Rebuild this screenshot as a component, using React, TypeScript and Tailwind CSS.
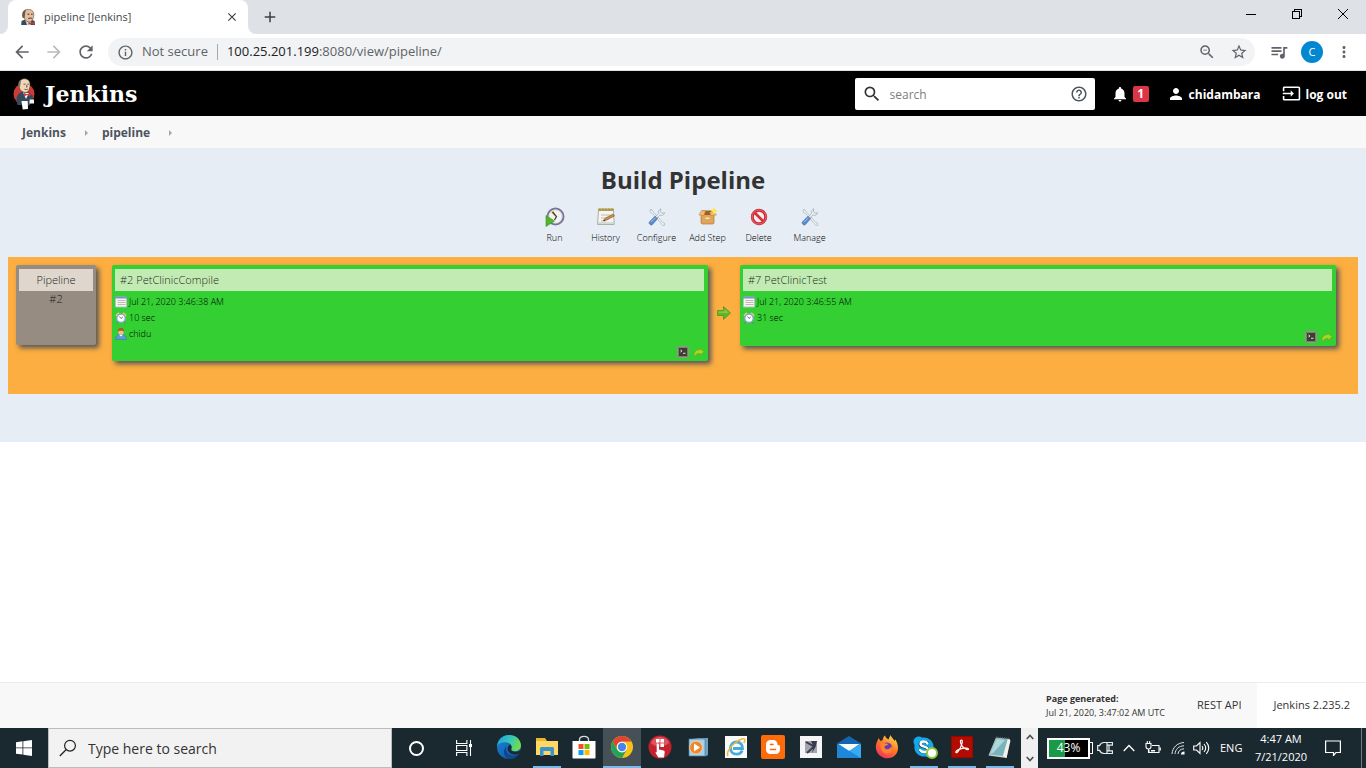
import type { ReactNode } from 'react';
import {
  MdAdd,
  MdArrowBack,
  MdArrowForward,
  MdClose,
  MdHelpOutline,
  MdInfoOutline,
  MdInput,
  MdMoreVert,
  MdNotifications,
  MdPerson,
  MdQueueMusic,
  MdRefresh,
  MdSearch,
  MdStarBorder,
  MdZoomOut,
} from 'react-icons/md';
import { FaBloggerB, FaSkype } from 'react-icons/fa';

/* ---------- Jenkins artwork ---------- */

function JenkinsFavicon() {
  return (
    <svg viewBox="0 0 16 16" className="size-4 shrink-0" aria-hidden="true">
      <path d="M1.2 16 1.500 12 5 10.500h6l3.600 1.500.4 4z" fill="#394b5a" />
      <path d="M5 10.500 7 16h3.500l1-5.500z" fill="#d9d5cf" />
      <path d="M3 5C3 1.500 6 .3 8.600.4c3.500.1 5.300 2.200 5.200 5.200-.1 3.500-1.400 7.200-4.400 7.300-3 .1-6.200-3.400-6.400-7.900z" fill="#e3bf9f" stroke="#5b463a" strokeWidth=".6" />
      <path d="M2.600 8.800C1.400 4.500 3 1.400 6 .6L5.200 4l-.6 5.300z" fill="#6d5a4c" />
      <path d="M7.500 5.200h1.900M11 5.200h1.700M8.300 9.600c1.400-.6 2.800-.6 4 0" stroke="#3a2c25" strokeWidth="1" fill="none" />
      <path d="m8.500 12.900 2.600 1 3-1.300v3.100l-3-1-2.600 1.100z" fill="#c8372f" />
    </svg>
  );
}

function JenkinsMascot() {
  return (
    <svg viewBox="0 0 24 32" className="h-8 w-6 shrink-0" aria-hidden="true">
      <ellipse cx="12" cy="16" rx="10.500" ry="10.500" fill="#cf3a36" />
      <path d="M5.500 27c-1.400-3.500-1.400-7.500.3-10.500l3.700-2.500 8 .5 3 3 .7 4-3.700 6z" fill="#33495c" />
      <path d="m11 14.500 3 6.500 3-6z" fill="#f5f3f0" />
      <g transform="translate(2.700 -.2) scale(.84)">
        <path d="M5 8.500C5 4 7.600 1.200 11.600 1.200c4.700 0 6.900 3.200 6.700 7.500-.2 4.800-1.900 8.800-5.600 8.800-3.500 0-7.700-3-7.700-9z" fill="#f0d5b7" stroke="#423630" strokeWidth=".7" />
        <path d="M4.500 11.500c-1-4.700.7-8.400 3.200-9.500L7.200 6l-1 5.500z" fill="#817367" />
        <path d="M10.500 7.600h2.500M15 7.600h2M11.600 13.600c1.500.6 2.900.5 4-.2M14.200 8.500l.6 2.500h-1.200" stroke="#3e3029" strokeWidth=".9" fill="none" />
      </g>
      <path d="m12 15 3 1.300 3.400-1.500v3.400L15 17l-3 1.500z" fill="#d33833" />
      <path d="M9.500 23h6.200l.3 8-5.300.5z" fill="#fff" />
      <path d="M17.700 21.500h4.300v4h-4.600z" fill="#f5f3f0" />
    </svg>
  );
}

/* ---------- Pipeline toolbar icons ---------- */

function RunIcon() {
  return (
    <svg viewBox="0 0 20 20" className="size-5" aria-hidden="true">
      <circle cx="10.500" cy="9.500" r="8" fill="#f2f3ef" stroke="#77759a" strokeWidth="2" />
      <circle cx="10.500" cy="9.500" r="6.600" fill="none" stroke="#c9cad4" strokeWidth=".6" />
      <path d="M10 9.500 6 5.200 9 3.500z" fill="#dccc5a" />
      <path d="m7.500 5 4 4.500-2 3.500" fill="none" stroke="#383838" strokeWidth="1.200" />
      <path d="M1 8.500 9.500 14 1 19.500z" fill="#52b52c" stroke="#39911e" strokeWidth=".6" />
    </svg>
  );
}

function HistoryIcon() {
  return (
    <svg viewBox="0 0 20 20" className="size-5" aria-hidden="true">
      <path d="M2.500 3h15l.7 14.500H1.500z" fill="#f5f5f2" stroke="#aeb0ac" />
      <path d="M2 1.500h16V4H2z" fill="#b7a755" />
      <path d="M4 1v3M7 1v3M10 1v3M13 1v3M16 1v3" stroke="#8a7d42" strokeWidth=".6" />
      <path d="M5 8h9M5 11h6M5 14h5M2 16h16" stroke="#bbbdb9" />
      <path d="m7.500 13.500 1.600-2.300 8-4.200 1.400 1.900-8 4.300z" fill="#d38a42" stroke="#72471f" strokeWidth=".5" />
      <path d="m7 13.900 2.100-.1-.9-1.300z" fill="#332b25" />
    </svg>
  );
}

function ToolsIcon() {
  return (
    <svg viewBox="0 0 20 20" className="size-5" aria-hidden="true">
      <path d="m3.200 2.500 1.800.3 1.700 2.700 8.800 9.700 1.900.8.300 2.200-1.700.4-1.800-2.200-8.700-9.700-2.200-1.400z" fill="#eff2f3" stroke="#9ba8b2" strokeWidth=".6" />
      <path d="M17.700 5.700a3.800 3.800 0 0 1-4.800 2.400l-3 3-1.500-1.500 3-3A3.800 3.800 0 0 1 14 1.800l-.7 2.700 1.800 1.600z" fill="#e6ebee" stroke="#929fa9" strokeWidth=".6" />
      <path d="m8 9.200 2.500 2.500-5.300 6c-1.200 1.200-4-1.300-2.800-2.700z" fill="#588acb" stroke="#3868a8" strokeWidth=".6" />
      <path d="m4 15.300 4.500-4.600" stroke="#a4c5ed" />
    </svg>
  );
}

function BoxIcon() {
  return (
    <svg viewBox="0 0 20 20" className="size-5" aria-hidden="true">
      <path d="M3 7h13v9l-1 1H4l-1-1z" fill="#e0a45a" stroke="#b87832" strokeWidth=".7" />
      <path d="M4 3.500h10L17 8H2z" fill="#996127" />
      <path d="m3.500 3.500 4 .5L6 8.500 1 8zM16 5l2.500 3-5.500.5L11.500 5z" fill="#efbd77" stroke="#b87832" strokeWidth=".5" />
      <path d="M7.500 10.500h4V12h-4z" fill="#fae5bd" />
      <path d="m16 1.500.8 1.700 1.700.8-1.700.8L16 6.500l-.8-1.700-1.700-.8 1.700-.8z" fill="#fff34d" stroke="#ffe537" strokeWidth="1.200" strokeLinejoin="round" />
    </svg>
  );
}

function DeleteIcon() {
  return (
    <svg viewBox="0 0 20 20" className="size-5" aria-hidden="true">
      <circle cx="10" cy="10" r="6.700" fill="#f8eaed" stroke="#c42a33" strokeWidth="3" />
      <path d="m5.500 5.500 9 9" stroke="#d5303a" strokeWidth="2.600" />
      <circle cx="10" cy="10" r="7" fill="none" stroke="#ec6970" strokeWidth="1" />
    </svg>
  );
}

/* ---------- Build card icons ---------- */

function CalendarIcon() {
  return (
    <svg viewBox="0 0 12 12" className="size-3 shrink-0" aria-hidden="true">
      <path d="M.5 1h11v10H.5z" fill="#f6f4ee" stroke="#b9c1ca" />
      <path d="M0 .500h12V2.500H0z" fill="#7597c2" />
      <path d="M2.500 4.500h8M2.500 6.500h8M2.500 8.500h8" stroke="#b6a8a0" strokeWidth=".8" />
    </svg>
  );
}

function ClockIcon() {
  return (
    <svg viewBox="0 0 12 12" className="size-3 shrink-0" aria-hidden="true">
      <path d="M.3 3.300 3.300.3l1.500 1.500-3 3zM11.700 3.300l-3-3-1.500 1.500 3 3z" fill="#f0cc66" />
      <path d="m3 9.500-1.500 2M9 9.500l1.500 2" stroke="#707780" />
      <circle cx="6" cy="6.300" r="4.300" fill="#fff" stroke="#7fa5c7" strokeWidth="1.500" />
      <path d="m4.500 4.500 1.500 2L7.800 5" fill="none" stroke="#49566a" strokeWidth=".8" />
    </svg>
  );
}

function UserIcon() {
  return (
    <svg viewBox="0 0 12 12" className="size-3 shrink-0" aria-hidden="true">
      <path d="M.5 11.500C.5 8.500 2 7 4 6.500h4c2 .5 3.500 2 3.500 5z" fill="#5b9ad2" stroke="#3671a8" strokeWidth=".5" />
      <path d="m4 6.500 2 2 2-2z" fill="#fff" />
      <circle cx="6" cy="4" r="2.800" fill="#f0bd87" />
      <path d="M3 4C2.500.800 4.200 0 6 0s3.500.8 3 4L8 2.700H4z" fill="#ab5924" />
    </svg>
  );
}

function ConsoleIcon() {
  return (
    <svg viewBox="0 0 12 12" className="size-3" aria-hidden="true">
      <rect x=".5" y=".5" width="11" height="11" rx="1" fill="#77816c" stroke="#8f9a80" />
      <path d="M2 2h8v8H2z" fill="#3c3d33" />
      <path d="m3.500 4 1.500 1-1.500 1M6 7.300h2.500" fill="none" stroke="#f1f4e6" strokeWidth=".9" />
    </svg>
  );
}

function RerunIcon() {
  return (
    <svg viewBox="0 0 12 12" className="size-3" aria-hidden="true">
      <path d="M1 10c-.2-4 2-6.500 5.300-6.200L6 2l5 3.500L7.500 9.200 7 7.500C4.700 7.300 3.200 8 2.500 10z" fill="#a9d620" stroke="#72a51c" strokeWidth=".7" strokeLinejoin="round" />
    </svg>
  );
}

function NextArrow() {
  return (
    <svg viewBox="0 0 14 14" className="size-3.5" aria-hidden="true">
      <path d="M.5 4.500h6V.600L13.500 7l-7 6.400V9.500h-6z" fill="#62b526" stroke="#4f9426" strokeWidth=".8" strokeLinejoin="round" />
      <path d="M1.500 5.500h6v-2.500L12 7H1.500z" fill="#85c93f" />
    </svg>
  );
}

/* ---------- Taskbar icons ---------- */

function EdgeIcon() {
  return (
    <svg viewBox="0 0 24 24" className="size-6" aria-hidden="true">
      <defs>
        <linearGradient id="edgeTop" x1="0" x2="1" y1="0" y2=".4">
          <stop offset="0" stopColor="#1d9de2" />
          <stop offset=".6" stopColor="#36c8b8" />
          <stop offset="1" stopColor="#6edb50" />
        </linearGradient>
        <linearGradient id="edgeLow" x1="0" x2="1" y1="0" y2="1">
          <stop offset="0" stopColor="#1b85d9" />
          <stop offset="1" stopColor="#0c4fa0" />
        </linearGradient>
      </defs>
      <circle cx="12" cy="12" r="12" fill="url(#edgeLow)" />
      <path d="M9.200 11.500c-1.200 4.700 1.800 9.300 7 9.200 2.300 0 4.500-.9 6.200-2.500C20.300 22 16.500 24 12.500 24 7 23.500 5 15.500 9.200 11.500z" fill="#124688" />
      <path d="M13.400 9.300c2 2.200.8 4 .7 5.300 0 2.600 5.700 3.200 10.900 0l-1.500 3.500c-4.500 2.700-11.400 1.200-12.700-2.900-.7-2.200.5-4.900 2.600-5.900z" fill="#1b2930" />
      <path d="M.1 11C.8 4.500 5.800 0 12.200 0 19 0 24 4.800 24 10.600c0 3.400-2.400 5.600-5.800 5.600-2.500 0-4.200-.9-3.700-2 1.200-2.600-.2-5.900-4.500-6.700C5.700 6.700 1.500 8.500.1 11z" fill="url(#edgeTop)" />
    </svg>
  );
}

function ExplorerIcon() {
  return (
    <svg viewBox="0 0 22 20" className="h-5 w-5.5" aria-hidden="true">
      <path d="M0 1h9l2 3h11v14H0z" fill="#eeb62b" />
      <path d="M0 4h22v14H0z" fill="#ffd766" />
      <path d="M4 11.500C4 10.700 4.700 10 5.500 10h11c.8 0 1.500.7 1.500 1.500V19h-3.500v-5h-7v5H4z" fill="#3b94c8" />
    </svg>
  );
}

function StoreIcon() {
  return (
    <svg viewBox="0 0 24 24" className="size-6" aria-hidden="true">
      <path d="M7.500 7V4.500C7.500.2 16.500.2 16.500 4.500V7" fill="none" stroke="#d9dddf" strokeWidth="1.300" />
      <path d="M.5 6h23v16.500c0 .6-.4 1-1 1h-21c-.6 0-1-.4-1-1z" fill="#fff" />
      <path d="M6.500 9h5v5h-5z" fill="#f25022" />
      <path d="M12.500 9h5v5h-5z" fill="#7fba00" />
      <path d="M6.500 15h5v5h-5z" fill="#00a4ef" />
      <path d="M12.500 15h5v5h-5z" fill="#ffb900" />
    </svg>
  );
}

function ChromeIcon() {
  return (
    <svg viewBox="0 0 22 22" className="size-5.5" aria-hidden="true">
      <circle cx="11" cy="11" r="11" fill="#fbc116" />
      <path d="M1.500 5.500A11 11 0 0 1 20.500 5.500H11a5.500 5.500 0 0 0-4.800 8.200z" fill="#de4537" />
      <path d="M1.500 5.500a11 11 0 0 0 9.500 16.500l4.800-8.300a5.500 5.500 0 0 1-9.600 0z" fill="#21a35b" />
      <circle cx="11" cy="11" r="5.200" fill="#fff" />
      <circle cx="11" cy="11" r="4.200" fill="#4586ee" />
    </svg>
  );
}

function TouchAppIcon() {
  return (
    <svg viewBox="0 0 24 24" className="size-6" aria-hidden="true">
      <circle cx="12" cy="12" r="11.500" fill="#c4212d" />
      <path d="M3 8C5 0 19 0 21 8c-4 4-14 5-18 0z" fill="#dc555e" />
      <path d="M8 4h3.500v3.500H8zM12.500 4H16v3.500h-3.500zM12.500 8.500H16V12h-3.500z" fill="#fff" />
      <path d="M8.700 8.500c1.500-.4 2.300.2 2.300 1.500v4.500l4.500 1c1 .2 1.300 1 1.200 1.800l-.7 5.200h-5.700l-3-5 1.400-.3z" fill="#fff" />
    </svg>
  );
}

function MediaPlayerIcon() {
  return (
    <svg viewBox="0 0 22 20" className="h-5 w-5.5" aria-hidden="true">
      <path d="M5 1h16v17l-3 1.500V3z" fill="#6aa3c5" />
      <path d="M2 2h16v17H2z" fill="#a7d1e4" stroke="#517d99" strokeWidth=".7" />
      <circle cx="9" cy="10.500" r="6.400" fill="#f28527" stroke="#f7d5b4" strokeWidth=".8" />
      <path d="m7 6.500 6 4-6 4z" fill="#fff" />
    </svg>
  );
}

function ExplorerEIcon() {
  return (
    <svg viewBox="0 0 22 22" className="size-5.5" aria-hidden="true">
      <path d="M0 0h22v22H0z" fill="#fafafa" />
      <path d="M17.200 14.500c-1 2.500-3.300 3.700-5.700 3.700-3.500 0-6-2.500-6-6s2.500-6.200 6-6.200 6.200 2.500 6 6.500H8" fill="none" stroke="#46aadb" strokeWidth="2.800" />
      <path d="M3 20c-2-3 2-9 7-13s10-5.500 10-3c0 1-.7 2-1.300 3" fill="none" stroke="#f0b830" strokeWidth="1.500" />
    </svg>
  );
}

function VpnIcon() {
  return (
    <svg viewBox="0 0 22 22" className="size-5.5" aria-hidden="true">
      <path d="M0 0h22v22H0z" fill="#f5f5f7" />
      <path d="M5 5h12v12H5z" fill="#a3a6b0" />
      <path d="m6 6 8 4.500L7 17" fill="none" stroke="#3a3e4c" strokeWidth="2" />
      <path d="m11 5 6 0-1.500 6L12 17l1.500-6.500z" fill="#373b49" />
    </svg>
  );
}

function MailIcon() {
  return (
    <svg viewBox="0 0 24 22" className="h-5.5 w-6" aria-hidden="true">
      <path d="M0 7.500 12 0l12 7.500V22H0z" fill="#1465ad" />
      <path d="M1.500 8h21L12 15.500z" fill="#f5fafd" />
      <path d="M24 7.500 11 15.500 22 22h2z" fill="#39aaf0" />
      <path d="M0 7.500 24 22H0z" fill="#1d87d9" />
    </svg>
  );
}

function FirefoxIcon() {
  return (
    <svg viewBox="0 0 24 24" className="size-6" aria-hidden="true">
      <defs>
        <linearGradient id="foxFire" x1=".8" x2=".2" y1="0" y2="1">
          <stop offset="0" stopColor="#ffe34a" />
          <stop offset=".45" stopColor="#ff7a26" />
          <stop offset="1" stopColor="#f02b68" />
        </linearGradient>
      </defs>
      <path d="M2.300 6.200 3.500 3l2 3 2.200-1C8 2 10 .6 10 .6c.3 2 2 3 3.500 4l2-4.600c1 2.800 3 4 4 6l1-1.500c3 5.500 3.700 11-.2 15.500-4 4.400-11.500 4.400-15.800.2C.2 16.200 0 10.500 2.300 6.200z" fill="url(#foxFire)" />
      <circle cx="12" cy="12.700" r="5.200" fill="#6b38b8" />
      <path d="M5.500 8.500C9 7 11.500 9 13.500 8.800c-1 2-4 1.700-4 3.400.5 3 5.500 3 7-1.200C19 17 14 19.500 10.500 18.500 7 17.500 5 13 5.500 8.500z" fill="#ff852d" />
    </svg>
  );
}

function BloggerIcon() {
  return (
    <span className="flex size-6 items-center justify-center rounded-xs bg-[#ff6b09]">
      <FaBloggerB className="size-4 text-white" />
    </span>
  );
}

function SkypeIcon() {
  return (
    <span className="relative flex size-6 items-center justify-center">
      <FaSkype className="absolute size-6 text-[#14a8e8]" />
      <svg viewBox="0 0 24 24" className="absolute size-6" aria-hidden="true">
        <path d="M15.500 8.500C14 5.500 8.500 6 8.500 9c0 3.300 7.500 2 7.500 5.500 0 3-6 3.500-8 .5" fill="none" stroke="#fff" strokeWidth="2.400" strokeLinecap="round" />
      </svg>
      <span className="absolute -right-0.5 bottom-0 size-3 rounded-full border-2 border-[#93c83d] bg-white" />
    </span>
  );
}

function AcrobatIcon() {
  return (
    <svg viewBox="0 0 22 22" className="size-5.5" aria-hidden="true">
      <path d="M0 0h22v22H0z" fill="#b30b00" stroke="#780700" />
      <path d="M5 16.500c-1-1.500 3-3.500 6.500-4.200 3-.6 6-.3 6 .8 0 1.700-4-.2-6.300-3C9 7.300 9 4 10.400 4c1.700 0 .8 4-1.200 8-1.700 3.200-3.400 5.300-4.200 4.500z" fill="none" stroke="#fff" strokeWidth="1.200" />
    </svg>
  );
}

function NotepadIcon() {
  return (
    <svg viewBox="0 0 24 24" className="size-6" aria-hidden="true">
      <path d="M8 2.500 22 4l-3.500 19L.5 20.500z" fill="#d8d6cb" />
      <path d="m8.200 3 11.600 1.200L15 21 1 19.500z" fill="#79b4bd" />
      <path d="m8.500 4 8.500 1L5 18l-3 1z" fill="#b0d7db" />
      <path d="m19.800 4.200 2.700 1.300L18.500 23 15 21z" fill="#f3f1e9" />
      <path d="m8 2 14 1.500" stroke="#4b565b" strokeWidth="1.500" strokeDasharray="1 1" />
    </svg>
  );
}

/* ---------- Browser chrome ---------- */

function TabStrip() {
  return (
    <div className="flex h-[34px] items-stretch bg-[#dee1e6]">
      <div className="flex w-2 items-end">
        <svg viewBox="0 0 8 8" className="size-2" aria-hidden="true">
          <path d="M8 0v8H0a8 8 0 0 0 8-8z" fill="#fff" />
        </svg>
      </div>
      <div className="flex w-60 items-center gap-2 rounded-t-lg bg-white pr-2 pl-3">
        <JenkinsFavicon />
        <span className="grow text-[11px] text-[#45494d]">pipeline [Jenkins]</span>
        <button type="button" aria-label="Close tab" className="flex size-4 items-center justify-center text-[#3c4043]">
          <MdClose className="size-3.5" />
        </button>
      </div>
      <div className="flex w-2 items-end">
        <svg viewBox="0 0 8 8" className="size-2" aria-hidden="true">
          <path d="M0 0v8h8a8 8 0 0 1-8-8z" fill="#fff" />
        </svg>
      </div>
      <button type="button" aria-label="New tab" className="flex w-7 items-center justify-center text-[#3c4043]">
        <MdAdd className="size-[18px]" />
      </button>
      <div className="ml-auto flex items-center pb-1.5">
        <button type="button" aria-label="Minimize" className="flex w-[46px] justify-center">
          <svg viewBox="0 0 10 10" className="size-2.5" shapeRendering="crispEdges" aria-hidden="true">
            <path d="M0 5.500h10" stroke="#000" />
          </svg>
        </button>
        <button type="button" aria-label="Restore" className="flex w-[46px] justify-center">
          <svg viewBox="0 0 10 10" className="size-2.5" shapeRendering="crispEdges" aria-hidden="true">
            <path d="M.5 2.500h7v7h-7zM2.500 2.500v-2h7v7h-2" fill="none" stroke="#000" />
          </svg>
        </button>
        <button type="button" aria-label="Close" className="flex w-[46px] justify-center">
          <svg viewBox="0 0 10 10" className="size-2.5" aria-hidden="true">
            <path d="m0 0 10 10M10 0 0 10" stroke="#000" />
          </svg>
        </button>
      </div>
    </div>
  );
}

function AddressBar() {
  return (
    <div className="flex h-[37px] items-center border-b border-[#dce0e0] bg-white pr-[13px] pl-3 text-[#5f6368]">
      <button type="button" aria-label="Back" className="mr-3">
        <MdArrowBack className="size-5" />
      </button>
      <button type="button" aria-label="Forward" className="mr-3 text-[#b8babd]">
        <MdArrowForward className="size-5" />
      </button>
      <button type="button" aria-label="Reload" className="mr-3">
        <MdRefresh className="size-5" />
      </button>
      <div className="flex h-7 grow items-center rounded-full bg-[#f1f3f4] px-[7px] text-[13px]">
        <MdInfoOutline className="mr-2 ml-0.5 size-[17px]" />
        <span>Not secure</span>
        <span className="mx-[9px] h-4 w-px bg-[#a5a9ad]" />
        <span className="grow">
          <span className="text-[#202124]">100.25.201.199</span>:8080/view/pipeline/
        </span>
        <button type="button" aria-label="Zoom" className="mr-3.5">
          <MdZoomOut className="size-[18px]" />
        </button>
        <button type="button" aria-label="Bookmark this page">
          <MdStarBorder className="size-[18px]" />
        </button>
      </div>
      <button type="button" aria-label="Media controls" className="ml-3.5">
        <MdQueueMusic className="size-5" />
      </button>
      <button
        type="button"
        aria-label="Profile"
        className="ml-3 flex size-[22px] items-center justify-center rounded-full bg-[#0288d1] text-[11px] text-white"
      >
        C
      </button>
      <button type="button" aria-label="Browser menu" className="ml-3">
        <MdMoreVert className="size-[18px]" />
      </button>
    </div>
  );
}

/* ---------- Jenkins page ---------- */

function JenkinsHeader() {
  return (
    <header className="flex h-[45px] items-center bg-black pr-[19px] pl-3 text-[12px] font-bold text-white">
      <a href="#home" className="flex items-center gap-[9px]">
        <JenkinsMascot />
        <span className="font-['DejaVu_Serif',serif] text-[22px] leading-8">Jenkins</span>
      </a>
      <div className="ml-auto flex h-8 w-60 items-center rounded-xs bg-white px-[7px] text-[#4d545d]">
        <MdSearch className="size-5 text-[#333]" />
        <input
          aria-label="search"
          placeholder="search"
          className="ml-2 min-w-0 grow pt-0.5 text-[12px] font-normal outline-none placeholder:text-[#7b7f83]"
        />
        <a href="#help" aria-label="Help">
          <MdHelpOutline className="size-[18px]" />
        </a>
      </div>
      <a href="#alerts" aria-label="1 notification" className="ml-4 flex items-center gap-1">
        <MdNotifications className="size-[18px]" />
        <span className="flex size-4 items-center justify-center rounded-xs bg-[#dc3545]">1</span>
      </a>
      <a href="#user" className="ml-[18px] flex items-center gap-1">
        <MdPerson className="size-[18px]" />
        <span className="pt-0.5">chidambara</span>
      </a>
      <a href="#logout" className="ml-[22px] flex items-center gap-1">
        <MdInput className="size-[19px]" />
        <span className="pt-0.5">log out</span>
      </a>
    </header>
  );
}

function CrumbArrow() {
  return (
    <svg viewBox="0 0 4 6" className="mr-[13px] ml-[19px] h-1.5 w-1" aria-hidden="true">
      <path d="m0 0 3 3-3 3z" fill="#a6a6a6" />
    </svg>
  );
}

function Breadcrumbs() {
  return (
    <nav className="flex h-8 items-center bg-[#f8f8f8] px-[22px] pt-0.5 text-[12px] font-bold text-[#4d545d]">
      <a href="#jenkins">Jenkins</a>
      <CrumbArrow />
      <a href="#pipeline">pipeline</a>
      <CrumbArrow />
    </nav>
  );
}

const actions: { label: string; icon: ReactNode }[] = [
  { label: 'Run', icon: <RunIcon /> },
  { label: 'History', icon: <HistoryIcon /> },
  { label: 'Configure', icon: <ToolsIcon /> },
  { label: 'Add Step', icon: <BoxIcon /> },
  { label: 'Delete', icon: <DeleteIcon /> },
  { label: 'Manage', icon: <ToolsIcon /> },
];

type Build = { title: string; started: string; duration: string; user?: string };

const builds: Build[] = [
  { title: '#2 PetClinicCompile', started: 'Jul 21, 2020 3:46:38 AM', duration: '10 sec', user: 'chidu' },
  { title: '#7 PetClinicTest', started: 'Jul 21, 2020 3:46:55 AM', duration: '31 sec' },
];

function BuildCard({ build }: { build: Build }) {
  return (
    <article className="grow basis-0 rounded-xs bg-[#33cf33] px-[3px] pt-1 shadow-[3px_3px_5px_#555]">
      <h2 className="mr-px bg-[#c1ebb3] px-[5px] text-[11px] leading-[22px] font-light text-[#1d2b18]">{build.title}</h2>
      <ul className="mt-[3px] text-[9px] leading-4 font-light text-black">
        <li className="flex items-center gap-0.5">
          <CalendarIcon />
          {build.started}
        </li>
        <li className="flex items-center gap-0.5">
          <ClockIcon />
          {build.duration}
        </li>
        {build.user && (
          <li className="flex items-center gap-0.5 leading-[15px]">
            <UserIcon />
            {build.user}
          </li>
        )}
      </ul>
      <div className="flex justify-end gap-1 pt-[5px] pb-[3px]">
        <a href="#console" aria-label="Console output">
          <ConsoleIcon />
        </a>
        <a href="#rerun" aria-label="Re-run">
          <RerunIcon />
        </a>
      </div>
    </article>
  );
}

function PipelineView() {
  return (
    <main className="bg-[#e6edf4] px-2 pb-12">
      <h1 className="pt-4 text-center text-[24px] leading-8 font-bold text-[#333]">Build Pipeline</h1>
      <nav className="flex justify-center pt-[11px] pr-0.5">
        {actions.map((action) => (
          <a
            key={action.label}
            href={`#${action.label}`}
            className="flex w-[51px] flex-col items-center text-[9px] leading-[10px] font-light whitespace-nowrap text-black"
          >
            {action.icon}
            <span className="mt-1.5">{action.label}</span>
          </a>
        ))}
      </nav>
      <section className="mt-3.5 flex min-h-[137px] items-start bg-[#fcae41] pt-2 pr-[22px] pl-2">
        <div className="mr-4 h-20 w-20 rounded-xs bg-[#968c81] px-[3px] pt-1 text-center text-[11px] font-light text-[#201d1a] shadow-[3px_3px_5px_#555]">
          <h2 className="bg-[#dfd7cd] leading-[22px]">Pipeline</h2>
          <p className="leading-4">#2</p>
        </div>
        <div className="flex grow items-start">
          <BuildCard build={builds[0]} />
          <div className="flex w-8 items-center justify-center self-stretch">
            <NextArrow />
          </div>
          <BuildCard build={builds[1]} />
        </div>
      </section>
    </main>
  );
}

function PageFooter() {
  return (
    <footer className="mt-auto flex h-[46px] items-stretch justify-end border-t border-[#ececec] bg-[#f8f8f8] text-[11px] text-[#333]">
      <div className="flex flex-col justify-center pr-8 text-[9px] leading-[14px]">
        <strong>Page generated:</strong>
        <span>Jul 21, 2020, 3:47:02 AM UTC</span>
      </div>
      <a href="#api" className="flex items-center pr-4">
        REST API
      </a>
      <a href="#version" className="flex items-center bg-white px-4">
        Jenkins 2.235.2
      </a>
    </footer>
  );
}

/* ---------- Taskbar ---------- */

const apps: { name: string; icon: ReactNode; state?: 'open' | 'active' }[] = [
  { name: 'Edge', icon: <EdgeIcon /> },
  { name: 'File Explorer', icon: <ExplorerIcon />, state: 'open' },
  { name: 'Store', icon: <StoreIcon /> },
  { name: 'Chrome', icon: <ChromeIcon />, state: 'active' },
  { name: 'Touch', icon: <TouchAppIcon /> },
  { name: 'Media Player', icon: <MediaPlayerIcon /> },
  { name: 'Internet Explorer', icon: <ExplorerEIcon /> },
  { name: 'Blogger', icon: <BloggerIcon /> },
  { name: 'Utility', icon: <VpnIcon /> },
  { name: 'Mail', icon: <MailIcon /> },
  { name: 'Firefox', icon: <FirefoxIcon /> },
  { name: 'Skype', icon: <SkypeIcon />, state: 'open' },
  { name: 'Acrobat', icon: <AcrobatIcon />, state: 'open' },
  { name: 'Notepad', icon: <NotepadIcon />, state: 'open' },
];

function TrayIcons() {
  return (
    <>
      <span className="flex items-center">
        <span className="flex h-[21px] w-[43px] items-center justify-center border-2 border-white bg-linear-to-r from-[#189a49] from-40% to-black to-40% text-[12px]">
          43%
        </span>
        <span className="h-3 w-[3px] border border-l-0 border-white" />
      </span>
      <svg viewBox="0 0 16 14" className="ml-1 h-3.5 w-4" aria-hidden="true">
        <path d="M10 1.500H7a5 5 0 0 0-4.500 3.200H.7v4.600h1.800A5 5 0 0 0 7 12.500h3zM10 1.500h5.500v2.700H10M10 9.800h5.500v2.700H10M12 4.200v5.600" fill="none" stroke="#e8eaeb" strokeWidth="1.200" />
      </svg>
      <svg viewBox="0 0 12 8" className="ml-2.5 h-2 w-3" aria-hidden="true">
        <path d="m.7 7 5.300-5.500L11.300 7" fill="none" stroke="#fff" strokeWidth="1.300" />
      </svg>
      <svg viewBox="0 0 16 14" className="ml-2.5 h-3.5 w-4" aria-hidden="true">
        <path d="M7 4.500h7v7H4V9M15.300 6.500v3M1 2.500h5v3a2.500 2.500 0 0 1-5 0zM2.300 2.500V0M4.700 2.500V0M3.500 8v4" fill="none" stroke="#fff" strokeWidth="1.100" />
        <path d="M6 9h4v1.500H6z" fill="#fff" />
      </svg>
      <svg viewBox="0 0 14 14" className="ml-2.5 size-3.5" aria-hidden="true">
        <path d="M1 13C1.500 6.500 6 2 13 1.500M4 13c.4-4.700 3.600-8 9-8.200M7 13c.3-3 2.300-5 6-5.200" fill="none" stroke="#dfe4e6" strokeWidth="1" />
        <path d="M10 13.500c0-2 1-3 3.500-3v3z" fill="#fff" />
      </svg>
      <svg viewBox="0 0 17 14" className="ml-2 h-3.5 w-[17px]" aria-hidden="true">
        <path d="M.7 5v4h2.800L7 12.500v-11L3.500 5zM9 5c1 1.200 1 2.800 0 4M11 3c2.200 2.500 2.200 5.500 0 8M13.300 1.200c3 3.500 3 8 0 11.600" fill="none" stroke="#fff" strokeWidth="1.100" />
      </svg>
      <span className="ml-2.5 w-[23px] text-[11px]">ENG</span>
      <span className="ml-[11px] w-[54px] text-center text-[11px] leading-[18px]">
        4:47 AM
        <br />
        7/21/2020
      </span>
      <button type="button" aria-label="Notifications" className="ml-[17px]">
        <svg viewBox="0 0 16 16" className="size-4" aria-hidden="true">
          <path d="M.6 1h14.800v11.500H11l-2.500 3v-3H.6z" fill="none" stroke="#fff" strokeWidth="1.200" />
        </svg>
      </button>
    </>
  );
}

function Taskbar() {
  return (
    <div className="flex h-10 items-stretch bg-[#1a2930] text-white">
      <button type="button" aria-label="Start" className="flex w-12 items-center justify-center">
        <svg viewBox="0 0 16 16" className="size-4" aria-hidden="true">
          <path d="m0 2.200 6.500-.9v6.200H0zM7.300 1.200 16 0v7.500H7.300zM0 8.300h6.500v6.300L0 13.700zM7.300 8.300H16V16l-8.700-1.200z" fill="#fff" />
        </svg>
      </button>
      <label className="flex w-[344px] items-center gap-[11px] border border-[#bcbcbc] bg-[#f2f2f2] px-2.5">
        <svg viewBox="0 0 18 18" className="size-[18px] shrink-0" aria-hidden="true">
          <circle cx="11" cy="6.700" r="5.400" fill="none" stroke="#222" strokeWidth="1.200" />
          <path d="M7 10.700.8 17" stroke="#222" strokeWidth="1.300" />
        </svg>
        <input
          aria-label="Type here to search"
          placeholder="Type here to search"
          className="min-w-0 grow text-[14px] outline-none placeholder:text-[#333]"
        />
      </label>
      <button type="button" aria-label="Cortana" className="flex w-12 items-center justify-center">
        <span className="size-[15px] rounded-full border-2 border-white" />
      </button>
      <button type="button" aria-label="Task view" className="flex w-12 items-center justify-center">
        <svg viewBox="0 0 17 16" className="h-4 w-[17px]" aria-hidden="true">
          <path d="M.6 0v3.500h10.300V0M.6 16v-3.500h10.300V16M.6 5.500h10.300v5H.6zM14.500 0v16" fill="none" stroke="#fff" strokeWidth="1.100" />
          <path d="M13 4h3v3h-3z" fill="#fff" />
        </svg>
      </button>
      <div className="mr-0.5 ml-0.5 flex w-[529px] items-stretch">
        {apps.map((app) => (
          <button
            key={app.name}
            type="button"
            aria-label={app.name}
            className={
              app.state === 'active'
                ? 'flex grow basis-0 flex-col items-center bg-[#465157]'
                : 'flex grow basis-0 flex-col items-center'
            }
          >
            <span className="flex grow items-center">{app.icon}</span>
            {app.state === 'active' && <span className="h-0.5 w-full bg-[#76b9ed]" />}
            {app.state === 'open' && <span className="h-0.5 w-7 bg-[#76b9ed]" />}
            {!app.state && <span className="h-0.5" />}
          </button>
        ))}
      </div>
      <div className="flex w-[17px] flex-col items-center justify-between bg-[#f0f0f0] py-[6px]">
        <button type="button" aria-label="Scroll up">
          <svg viewBox="0 0 8 6" className="block h-1.5 w-2" aria-hidden="true">
            <path d="m.7 5 3.300-3.500L7.300 5" fill="none" stroke="#505050" strokeWidth="1.700" />
          </svg>
        </button>
        <button type="button" aria-label="Scroll down">
          <svg viewBox="0 0 8 6" className="block h-1.5 w-2" aria-hidden="true">
            <path d="M.7 1 4 4.500 7.300 1" fill="none" stroke="#505050" strokeWidth="1.700" />
          </svg>
        </button>
      </div>
      <div className="flex grow items-center pl-[9px]">
        <TrayIcons />
        <span className="mr-1 ml-auto w-px self-stretch bg-[#70797d]" />
      </div>
    </div>
  );
}

export default function App() {
  return (
    <div className="flex min-h-screen flex-col bg-white font-['Open_Sans','Noto_Sans',sans-serif] leading-normal">
      <TabStrip />
      <AddressBar />
      <JenkinsHeader />
      <Breadcrumbs />
      <PipelineView />
      <PageFooter />
      <Taskbar />
    </div>
  );
}
